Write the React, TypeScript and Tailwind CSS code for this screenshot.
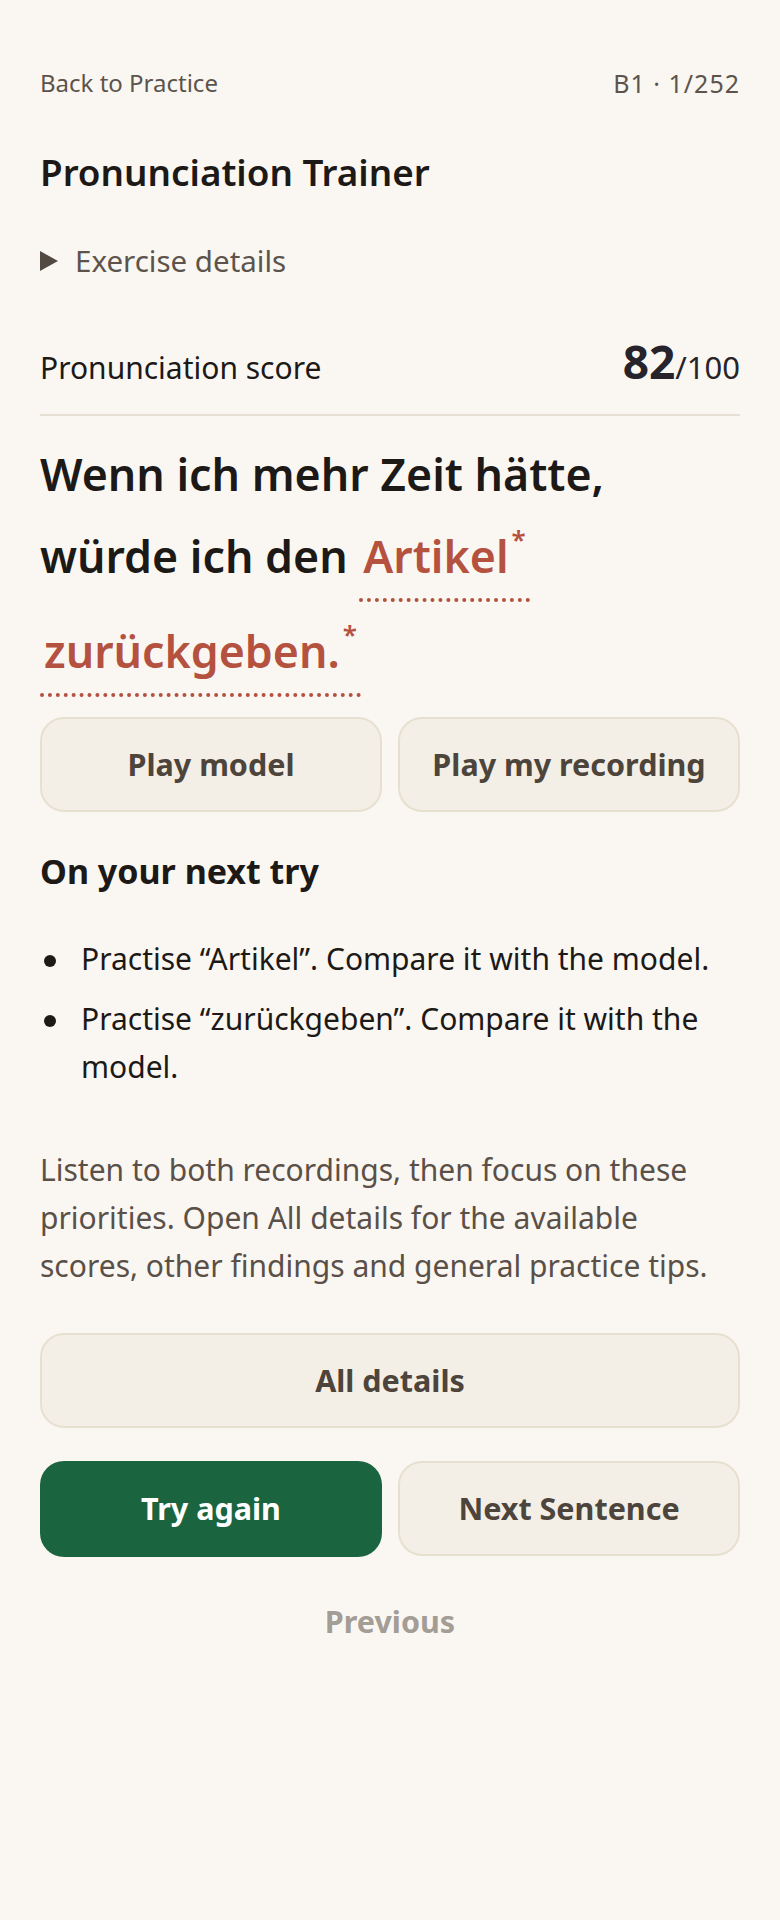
import React from "react";

type Tip = { word: string };

const tips: Tip[] = [{ word: "Artikel" }, { word: "zurückgeben" }];

const FlaggedWord = ({ text, className = "" }: { text: string; className?: string }) => (
  <span
    className={`inline-block px-[4px] pb-[1px] border-b-4 border-dotted border-[#b4513f] text-[#b4513f] ${className}`}
  >
    {text}
    <sup className="text-[26px] ml-[3px] -top-[24px]">*</sup>
  </span>
);

const SoftButton = ({ label }: { label: string }) => (
  <button className="h-[95px] rounded-[24px] border-2 border-[#e7e0d0] bg-[#f3efe6] text-[30.5px] font-bold text-[#4d443b]">
    {label}
  </button>
);

export default function App() {
  return (
    <div className="min-h-[1920px] w-full bg-[#faf7f2] font-['Noto_Sans',sans-serif] text-[#1c1917]">
      <div className="px-[40px] pt-[65px]">
        {/* top bar */}
        <div className="flex justify-between text-[24px] leading-[36px] text-[#5c544c]">
          <a href="#">Back to Practice</a>
          <span className="text-[25px] tracking-[1px]">B1 · 1/252</span>
        </div>

        <h1 className="mt-[49px] text-[36.8px] leading-[44px] font-semibold text-[#1c1917]">
          Pronunciation Trainer
        </h1>

        <div className="mt-[47px] flex items-center gap-[17px] text-[29.5px] leading-[40px] text-[#5c544c]">
          <svg width="18" height="20" viewBox="0 0 18 20" className="shrink-0">
            <path d="M0 0 L18 10 L0 20 Z" fill="#524a42" />
          </svg>
          <span>Exercise details</span>
        </div>

        {/* score */}
        <div className="mt-[56px] flex items-baseline justify-between border-b-2 border-[#e5e0d3] pb-[23px]">
          <span className="text-[30px] leading-[40px] text-[#1c1917]">Pronunciation score</span>
          <span className="text-[46px] leading-[48px] text-[#27232b]">
            <span className="font-bold">82</span>
            <span className="text-[31px]">/100</span>
          </span>
        </div>

        {/* sentence */}
        <p className="mt-[17px] text-[44.7px] leading-[82px] font-semibold text-[#1c1917]">
          Wenn ich mehr Zeit hätte, würde ich den <FlaggedWord text="Artikel" />{" "}
          <FlaggedWord text="zurückgeben." className="mt-[8px]" />
        </p>

        <div className="mt-[20px] grid grid-cols-2 gap-4">
          <SoftButton label="Play model" />
          <SoftButton label="Play my recording" />
        </div>

        <h2 className="mt-[39px] text-[34px] leading-[40px] font-bold text-[#1c1917]">On your next try</h2>

        <ul className="mt-[44px] flex flex-col gap-[12px] text-[30px] leading-[48px] text-[#1c1917]">
          {tips.map((t) => (
            <li key={t.word} className="flex items-start">
              <span className="mt-[20px] ml-[4px] mr-[25px] h-[12px] w-[12px] shrink-0 rounded-full bg-[#1c1917]" />
              <span>
                Practise “{t.word}”. Compare it with the model.
              </span>
            </li>
          ))}
        </ul>

        <p className="mt-[55px] text-[30px] leading-[48px] text-[#5a5048]">
          Listen to both recordings, then focus on these priorities. Open All details for the available
          scores, other findings and general practice tips.
        </p>

        <div className="mt-[43px] grid">
          <SoftButton label="All details" />
        </div>

        <div className="mt-[33px] grid grid-cols-2 gap-4">
          <button className="h-[96px] rounded-[24px] bg-[#1a6540] text-[30.5px] font-bold text-white">
            Try again
          </button>
          <SoftButton label="Next Sentence" />
        </div>

        <div className="mt-[44px] text-center text-[30.5px] leading-[40px] font-bold text-[#a39d95]">
          Previous
        </div>
      </div>
    </div>
  );
}
